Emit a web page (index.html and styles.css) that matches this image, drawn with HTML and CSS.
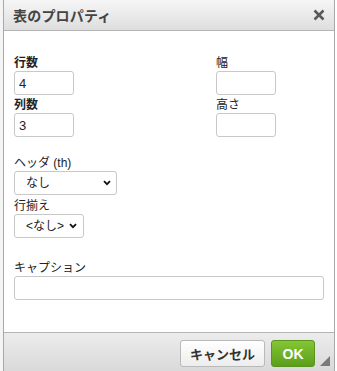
FILE: index.html
```html
<!DOCTYPE html>
<html lang="ja">
<head>
<meta charset="utf-8">
<link rel="stylesheet" href="styles.css">
</head>
<body>
<div class="page">
  <div class="dialog">
    <div class="titlebar">
      <span class="title">表のプロパティ</span>
      <svg class="close" width="12" height="12" viewBox="0 0 12 12"><path d="M1.5 1.5 L10.5 10.5 M10.5 1.5 L1.5 10.5" stroke="#5a5a5a" stroke-width="2.6" stroke-linecap="butt"/></svg>
    </div>
    <div class="content">
      <div class="grid">
        <div class="field">
          <label class="lbl bold">行数</label>
          <input class="txt small" type="text" value="4">
          <label class="lbl bold">列数</label>
          <input class="txt small" type="text" value="3">
        </div>
        <div class="field">
          <label class="lbl">幅</label>
          <input class="txt small" type="text" value="">
          <label class="lbl">高さ</label>
          <input class="txt small" type="text" value="">
        </div>
      </div>
      <div class="section">
        <label class="lbl">ヘッダ (th)</label>
        <select class="sel sel-wide"><option>なし</option></select>
        <label class="lbl">行揃え</label>
        <select class="sel sel-narrow"><option>&lt;なし&gt;</option></select>
      </div>
      <div class="section caption">
        <label class="lbl">キャプション</label>
        <input class="txt wide" type="text" value="">
      </div>
    </div>
    <div class="footer">
      <button class="btn cancel">キャンセル</button>
      <button class="btn ok">OK</button>
      <span class="grip"></span>
    </div>
  </div>
</div>
</body>
</html>
```
FILE: styles.css
```css
html, body {
  margin: 0;
  padding: 0;
  background: #ffffff;
}
body {
  font-family: "Liberation Sans", "Noto Sans CJK JP", sans-serif;
  color: #222;
}
.page {
  width: 337px;
  height: 371px;
  position: relative;
  background: linear-gradient(to right, #f4f4f4 0, #f4f4f4 3px, #fff 3px);
  overflow: hidden;
}
.dialog {
  margin-left: 3px;
  width: 332px;
  height: 371px;
  box-sizing: border-box;
  border-left: 1px solid #a9a9a9;
  border-right: 1px solid #a9a9a9;
  display: flex;
  flex-direction: column;
  background: #fff;
}
.titlebar {
  height: 31px;
  box-sizing: border-box;
  border-bottom: 1px solid #b4b4b4;
  background: linear-gradient(to bottom, #f6f6f6, #dedede);
  display: flex;
  align-items: center;
  justify-content: space-between;
  padding: 0 9px 0 9px;
}
.title {
  font-size: 14px;
  font-weight: bold;
  color: #444;
  letter-spacing: 0.2px;
}
.close {
  display: block;
}
.content {
  flex: 1;
  padding: 24px 10px 0 10px;
}
.grid {
  display: grid;
  grid-template-columns: 202px 1fr;
}
.field {
  display: flex;
  flex-direction: column;
  align-items: flex-start;
}
.lbl {
  display: block;
  font-size: 12px;
  line-height: 16px;
  color: #222;
}
.bold {
  font-weight: bold;
}
.txt {
  box-sizing: border-box;
  height: 24px;
  border: 1px solid #c8c8c8;
  border-radius: 3px;
  font-family: "Liberation Sans", "Noto Sans CJK JP", sans-serif;
  font-size: 13px;
  padding: 0 4px;
  margin: 0 0 2px 0;
  color: #222;
  background: #fff;
  outline: none;
}
.small {
  width: 60px;
}
.wide {
  width: 310px;
}
.section {
  display: flex;
  flex-direction: column;
  align-items: flex-start;
  margin-top: 16px;
}
.sel {
  appearance: none;
  -webkit-appearance: none;
  box-sizing: border-box;
  height: 24px;
  border: 1px solid #c8c8c8;
  border-radius: 3px;
  background-color: #fff;
  background-image: url("data:image/svg+xml;utf8,<svg xmlns='http://www.w3.org/2000/svg' width='8' height='6' viewBox='0 0 8 6'><path d='M1 1.2 L4 4.2 L7 1.2' fill='none' stroke='%23111' stroke-width='1.8'/></svg>");
  background-repeat: no-repeat;
  font-family: "Liberation Sans", "Noto Sans CJK JP", sans-serif;
  font-size: 12px;
  color: #222;
  padding: 0 0 0 11px;
  margin: 0 0 3px 0;
  outline: none;
}
.sel-wide {
  width: 103px;
  background-position: right 5px center;
}
.sel-narrow {
  width: 70px;
  background-position: right 6px center;
}
.caption {
  margin-top: 19px;
}
.footer {
  height: 39px;
  box-sizing: border-box;
  border-top: 1px solid #b4b4b4;
  background: linear-gradient(to bottom, #ececec, #d9d9d9);
  display: flex;
  align-items: flex-start;
  justify-content: flex-end;
  padding: 7px 19px 0 0;
  gap: 6px;
  position: relative;
}
.btn {
  height: 27px;
  box-sizing: border-box;
  border-radius: 3px;
  font-family: "Liberation Sans", "Noto Sans CJK JP", sans-serif;
  font-weight: bold;
  padding: 0;
  margin: 0;
}
.cancel {
  width: 85px;
  border: 1px solid #b9b9b9;
  background: linear-gradient(to bottom, #ffffff, #ededed);
  color: #333;
  font-size: 13px;
}
.ok {
  width: 44px;
  border: 1px solid #5b9320;
  background: linear-gradient(to bottom, #84c635, #5c9e1a);
  color: #fff;
  font-size: 14px;
}
.grip {
  position: absolute;
  right: 4px;
  bottom: 5px;
  width: 0;
  height: 0;
  border-left: 10px solid transparent;
  border-bottom: 10px solid #7a7a7a;
}
```
